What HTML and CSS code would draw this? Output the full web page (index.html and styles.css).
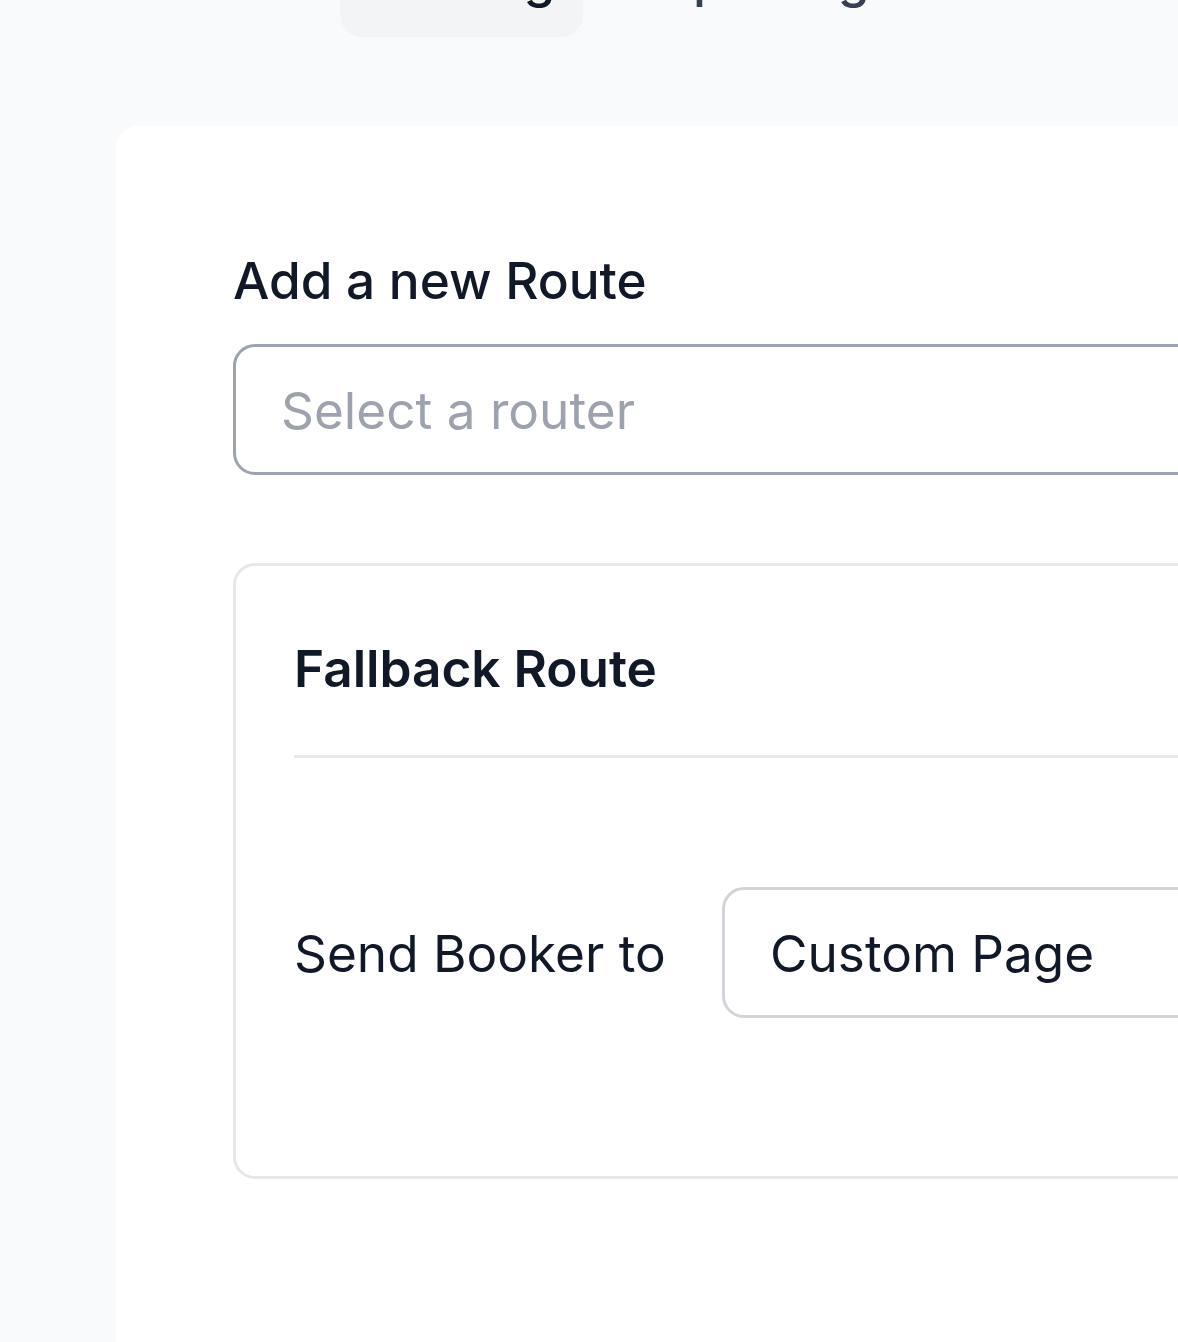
FILE: index.html
```html
<!DOCTYPE html>
<html lang="en">
<head>
<meta charset="utf-8">
<title>Routing</title>
<link rel="stylesheet" href="styles.css">
</head>
<body>
  <nav class="tabs">
    <a class="tab">Form</a>
    <a class="tab tab-active">Routing</a>
    <a class="tab">Reporting</a>
  </nav>
  <main class="card">
    <label class="field-label">Add a new Route</label>
    <div class="select select-router">
      <span class="placeholder">Select a router</span>
    </div>
    <section class="fallback">
      <h2 class="fallback-title">Fallback Route</h2>
      <hr class="divider">
      <div class="send-row">
        <span class="send-label">Send Booker to</span>
        <div class="select select-action">
          <span class="value">Custom Page</span>
        </div>
      </div>
    </section>
  </main>
</body>
</html>
```

FILE: styles.css
```css
html, body {
  margin: 0;
  padding: 0;
  overflow: hidden;
  background: #f9fafb;
  font-family: Inter, "Noto Sans", sans-serif;
  color: #111827;
}

body {
  width: 1178px;
  height: 1342px;
}

.tabs {
  display: flex;
  margin-top: -93px;
  padding-left: 140px;
  gap: 20px;
}

.tab {
  display: block;
  padding: 35px 27.5px 23px 27.5px;
  font-size: 51.3px;
  line-height: 72px;
  font-weight: 500;
  color: #374151;
  border-radius: 22px;
  white-space: nowrap;
}

.tab-active {
  background: #f3f4f6;
  color: #111827;
}

.card {
  margin: 89px 0 0 116px;
  width: 1600px;
  min-height: 1400px;
  box-sizing: border-box;
  background: #ffffff;
  border-radius: 22px;
  padding: 118px 0 0 117px;
}

.field-label {
  display: block;
  font-size: 51.3px;
  line-height: 72px;
  font-weight: 500;
  color: #111827;
  margin-bottom: 28px;
}

.select {
  box-sizing: border-box;
  height: 131px;
  display: flex;
  align-items: center;
  border-radius: 22px;
  background: #ffffff;
  font-size: 51.3px;
  line-height: 72px;
}

.select-router {
  border: 3.5px solid #9ca3af;
  padding-left: 45px;
  width: 1300px;
}

.placeholder {
  color: #9ca3af;
}

.fallback {
  margin-top: 88px;
  width: 1300px;
  box-sizing: border-box;
  border: 3.5px solid #e5e7eb;
  border-radius: 22px;
  padding: 66px 0 158px 58px;
}

.fallback-title {
  margin: 0;
  font-size: 51.3px;
  line-height: 72px;
  font-weight: 600;
  color: #111827;
}

.divider {
  margin: 51px 0 0 0;
  border: 0;
  border-top: 3.5px solid #e5e7eb;
  height: 0;
}

.send-row {
  display: flex;
  align-items: center;
  margin-top: 129px;
}

.send-label {
  font-size: 51.3px;
  line-height: 72px;
  color: #111827;
  width: 428px;
  flex: none;
}

.select-action {
  border: 3.5px solid #d1d5db;
  padding-left: 45px;
  width: 700px;
  color: #111827;
}
```
